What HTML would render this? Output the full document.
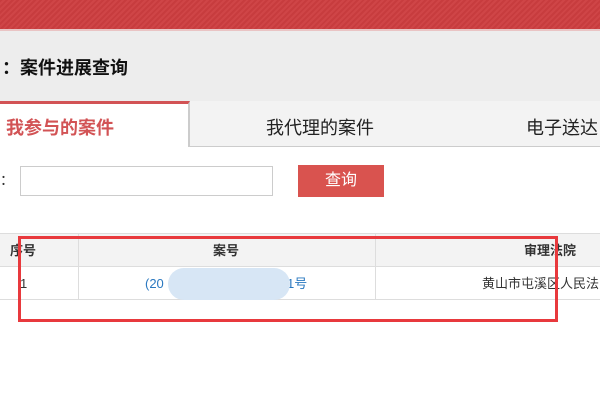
<!DOCTYPE html>
<html><head><meta charset="utf-8"><style>
*{margin:0;padding:0;box-sizing:border-box}
body{width:600px;height:400px;overflow:hidden;background:#fff;font-family:"Liberation Sans","Noto Sans CJK SC",sans-serif;position:relative;line-height:1}
.abs{position:absolute}
.top{left:0;top:0;width:600px;height:29px;background:repeating-linear-gradient(135deg,#c73c3e 0 2px,#cf4547 2px 4px)}
.topline{left:0;top:29px;width:600px;height:2px;background:#e9c4c4}
.gray{left:0;top:31px;width:600px;height:70px;background:#ededed}
.title{left:2px;top:59px;font-size:18px;font-weight:bold;color:#111}
.tabs{left:0;top:101px;width:600px;height:46px;background:#f3f3f3;border-bottom:1px solid #ccc}
.tab1{left:0;top:101px;width:190px;height:46px;background:#fff;border-top:3px solid #d25355;border-right:2px solid #ccc}
.t{font-size:18px;top:119px}
.inp{left:20px;top:166px;width:253px;height:30px;border:1px solid #ccc}
.btn{left:298px;top:165px;width:86px;height:32px;background:#d9534f;color:#fff;font-size:16px;text-align:center;line-height:32px}
.thead{left:0;top:233px;width:600px;height:34px;background:#f3f3f3;border-top:1px solid #ddd;border-bottom:1px solid #ddd}
.row{left:0;top:267px;width:600px;height:33px;border-bottom:1px solid #ddd}
.vl{width:1px;background:#ddd;top:233px;height:67px}
.c{font-size:13px}
.box{left:18px;top:236px;width:540px;height:86px;border:3px solid #e8393d}
.blur{left:168px;top:268px;width:122px;height:32px;background:#d7e6f5;border-radius:16px}
</style></head><body>
<div class="abs top"></div><div class="abs topline"></div>
<div class="abs gray"></div>
<div class="abs title">：案件进展查询</div>
<div class="abs tabs"></div>
<div class="abs tab1"></div>
<div class="abs t" style="left:6px;color:#d25355;font-weight:bold">我参与的案件</div>
<div class="abs t" style="left:266px;color:#222">我代理的案件</div>
<div class="abs t" style="left:526px;color:#222">电子送达</div>
<div class="abs" style="left:0;top:173px;font-size:14px;color:#333">：</div>
<div class="abs inp"></div>
<div class="abs btn">查询</div>
<div class="abs thead"></div>
<div class="abs row"></div>
<div class="abs vl" style="left:78px"></div>
<div class="abs vl" style="left:375px"></div>
<div class="abs c" style="left:10px;top:244px;color:#333;font-weight:bold">序号</div>
<div class="abs c" style="left:213px;top:244px;color:#333;font-weight:bold">案号</div>
<div class="abs c" style="left:524px;top:244px;color:#333;font-weight:bold">审理法院</div>
<div class="abs c" style="left:20px;top:277px;color:#333">1</div>
<div class="abs c" style="left:145px;top:277px;color:#2a78c0">(20</div>
<div class="abs c" style="left:287px;top:277px;color:#2a78c0">1号</div>
<div class="abs blur"></div>
<div class="abs c" style="left:482px;top:277px;color:#333;white-space:nowrap">黄山市屯溪区人民法院</div>
<div class="abs box"></div>
</body></html>
